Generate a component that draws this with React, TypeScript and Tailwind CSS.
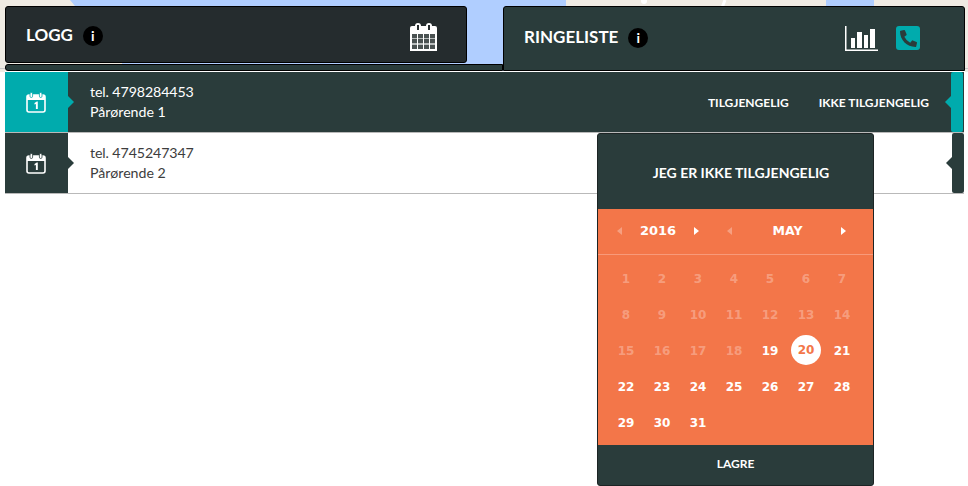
import React from "react";
import { FaPhoneAlt } from "react-icons/fa";

const lato = "font-['Lato','Liberation_Sans',sans-serif]";
const dejavu = "font-['DejaVu_Sans','Liberation_Sans',sans-serif]";

function MapBackdrop() {
  return (
    <svg className="absolute left-0 top-0" width="968" height="72" viewBox="0 0 968 72">
      <rect width="968" height="72" fill="#efebe3" />
      <path d="M70 0 L122 63 L122 72 L566 72 L566 0 Z" fill="#b0ceff" />
      <path d="M826 0 C832 -2 860 -2 874 0 L874 8 L826 8 Z" fill="#b0ceff" />
      <rect x="0" y="68" width="122" height="1" fill="#c8c8c8" />
      <rect x="964" y="68" width="4" height="1" fill="#c8c8c8" />
      <circle cx="644" cy="1" r="3" fill="#fff" />
      <path d="M725 0 L722 8" stroke="#fff" strokeWidth="3" />
    </svg>
  );
}

function InfoDot() {
  return (
    <span className="flex h-5 w-5 items-center justify-center rounded-full bg-black text-[14px] font-bold leading-none text-white">
      i
    </span>
  );
}

function BigCalendar() {
  return (
    <svg width="27" height="28" viewBox="0 0 27 28" className="block">
      <path d="M0 5 Q0 3 2 3 H25 Q27 3 27 5 V28 H0 Z" fill="#fff" />
      <rect x="5" y="0" width="6" height="9" rx="3" fill="#fff" />
      <rect x="16" y="0" width="6" height="9" rx="3" fill="#fff" />
      <rect x="7" y="2" width="2" height="5" fill="#252c2e" />
      <rect x="18" y="2" width="2" height="5" fill="#252c2e" />
      <rect x="2" y="11" width="23" height="15" fill="#b9bdbd" />
      {[11, 16, 22].flatMap((y) =>
        [2, 8, 14, 20].map((x) => <rect key={`${x}-${y}`} x={x} y={y} width="5" height="4" fill="#4a5252" />),
      )}
      {[7, 13, 19].map((x) => <rect key={x} x={x} y="11" width="1" height="15" fill="#fff" />)}
    </svg>
  );
}

function ChartIcon() {
  return (
    <svg width="33" height="25" viewBox="0 0 33 25" className="block">
      <path d="M0.75 0 V24.25 H33" fill="none" stroke="#fff" strokeWidth="1.5" />
      <rect x="6" y="12" width="4" height="10" fill="#fff" />
      <rect x="12" y="6" width="5" height="16" fill="#fff" />
      <rect x="19" y="9" width="4" height="13" fill="#fff" />
      <rect x="25" y="3" width="5" height="19" fill="#fff" />
    </svg>
  );
}

function SmallCalendar({ bg }: { bg: string }) {
  return (
    <svg width="20" height="21" viewBox="0 0 20 21" className="block">
      <rect x="1" y="3" width="18" height="17" rx="2" fill="none" stroke="#fff" strokeWidth="1.6" />
      <rect x="1" y="3" width="18" height="5" fill="#fff" />
      <rect x="4" y="0.5" width="2.6" height="5" rx="1.3" fill="#fff" stroke={bg} strokeWidth="0.8" />
      <rect x="13.4" y="0.5" width="2.6" height="5" rx="1.3" fill="#fff" stroke={bg} strokeWidth="0.8" />
      <path d="M8.5 11 L10.8 9.6 H11.8 V17 H9.9 V11.9 L8.5 12.6 Z" fill="#fff" />
    </svg>
  );
}

function RowArrow({ active }: { active: boolean }) {
  return (
    <span
      className={`absolute left-[63px] top-1/2 h-0 w-0 -translate-y-1/2 border-y-[6px] border-l-[6px] border-y-transparent ${active ? "border-l-[#00abad]" : "border-l-[#2a3c3b]"}`}
    />
  );
}

function Row({ active, phone, name }: { active: boolean; phone: string; name: string }) {
  return (
    <div
      className={`relative flex h-[61px] items-stretch border-b border-[#b9b9b9] ${active ? "bg-[#2a3c3b] text-white" : "bg-white text-[#3d3d3d]"} ${lato}`}
    >
      <div className={`flex w-[63px] shrink-0 items-center justify-center pr-[2px] ${active ? "bg-[#00abad]" : "bg-[#2a3c3b]"}`}>
        <SmallCalendar bg={active ? "#00abad" : "#2a3c3b"} />
      </div>
      <RowArrow active={active} />
      <div className="flex flex-col justify-center pb-[1px] pl-[22px] text-[14.2px] leading-[20px]">
        <div className="tracking-[-0.1px]">{phone}</div>
        <div>{name}</div>
      </div>
      <div className="ml-auto flex items-center">
        {active && (
          <div className="flex items-center gap-[30px] pr-[22px] pt-[2px] text-[12px] font-bold text-white">
            <span>TILGJENGELIG</span>
            <span>IKKE TILGJENGELIG</span>
          </div>
        )}
        <div className={`relative h-full ${active ? "mr-[1px]" : ""}`}>
          <span
            className={`absolute right-[12px] top-1/2 h-0 w-0 -translate-y-1/2 border-y-[6px] border-r-[6px] border-y-transparent ${active ? "border-r-[#00abad]" : "border-r-[#2a3c3b]"}`}
          />
          <div className={`h-full w-[12px] rounded-[2px] ${active ? "bg-[#00abad]" : "bg-[#2a3c3b]"}`} />
        </div>
      </div>
    </div>
  );
}

function Tri({ dir, dim }: { dir: "l" | "r"; dim?: boolean }) {
  return dir === "l" ? (
    <span className={`h-0 w-0 border-y-[4px] border-r-[5px] border-y-transparent ${dim ? "border-r-white/30" : "border-r-white"}`} />
  ) : (
    <span className={`h-0 w-0 border-y-[4px] border-l-[5px] border-y-transparent ${dim ? "border-l-white/30" : "border-l-white"}`} />
  );
}

function Calendar() {
  const days = Array.from({ length: 31 }, (_, i) => i + 1);
  return (
    <div className="absolute left-[597px] top-[133px] flex h-[353px] w-[277px] flex-col overflow-hidden rounded-[3px] border border-[#1c2424] bg-[#2a3c3b]">
      <div className={`flex h-[75px] items-center justify-center pl-[11px] pt-[1px] text-[14px] font-bold text-white ${lato}`}>
        JEG ER IKKE TILGJENGELIG
      </div>
      <div className={`flex-1 bg-[#f37649] text-white ${dejavu}`}>
        <div className="flex h-[46px] items-center border-b border-[#f89a7a] text-[13px] font-bold leading-[16px]">
          <div className="flex w-[112px] items-center justify-between pb-[1px] pl-[19px] pr-[11px]">
            <Tri dir="l" dim />
            <span>2016</span>
            <Tri dir="r" />
          </div>
          <div className="flex flex-1 items-center justify-between pb-[1px] pl-[17px] pr-[27px]">
            <Tri dir="l" dim />
            <span className="pl-[2px] text-[12.5px]">MAY</span>
            <Tri dir="r" />
          </div>
        </div>
        <div className="grid auto-rows-[36px] grid-cols-[repeat(7,36px)] pl-[10px] pt-[5px] text-[12px] font-bold">
          {days.map((d) => (
            <div key={d} className="flex items-center justify-center">
              {d === 20 ? (
                <span className="flex h-[30px] w-[30px] items-center justify-center rounded-full bg-white text-[#f37649]">{d}</span>
              ) : (
                <span className={`pt-[1px] ${d < 19 ? "text-white/30" : "text-white"}`}>{d}</span>
              )}
            </div>
          ))}
        </div>
      </div>
      <div className={`flex h-[40px] items-center justify-center pb-[2px] text-[12px] font-bold text-white ${lato}`}>LAGRE</div>
    </div>
  );
}

export default function App() {
  return (
    <div className="relative h-[486px] w-[968px] overflow-hidden bg-white">
      <MapBackdrop />
      <header className={`relative flex h-[71px] pl-[5px] pt-[6px] text-white ${lato}`}>
        <div className="w-[498px]">
          <div className="flex h-[57px] w-[462px] items-center rounded-[3px] border border-black bg-[#252c2e] pl-[20px] pr-[29px]">
            <span className="pt-[1px] text-[17px] font-bold">LOGG</span>
            <span className="ml-[10px] pt-[3px]"><InfoDot /></span>
            <span className="ml-auto pt-[4px]"><BigCalendar /></span>
          </div>
          <div className="mt-[1px] h-[7px] rounded-l-[3px] border border-black bg-[#2a3c3b]" />
        </div>
        <div className="flex h-[65px] w-[462px] rounded-t-[3px] border border-black bg-[#2a3c3b] pl-[20px] pr-[44px] pt-[19px]">
          <div className="flex h-[24px] w-full items-center">
            <span className="-mt-[2px] text-[17px] font-bold">RINGELISTE</span>
            <span className="ml-[10px]"><InfoDot /></span>
            <span className="ml-auto"><ChartIcon /></span>
            <span className="ml-[18px] flex h-[24px] w-[24px] items-center justify-center rounded-[3px] bg-[#00abad] text-[#2a3c3b]">
              <FaPhoneAlt className="h-[17px] w-[17px]" />
            </span>
          </div>
        </div>
      </header>
      <div className="relative ml-[5px] mr-[3px] h-px bg-white" />
      <main className="relative pl-[5px] pr-[4px]">
        <Row active phone="tel. 4798284453" name="Pårørende 1" />
        <Row active={false} phone="tel. 4745247347" name="Pårørende 2" />
      </main>
      <Calendar />
    </div>
  );
}
